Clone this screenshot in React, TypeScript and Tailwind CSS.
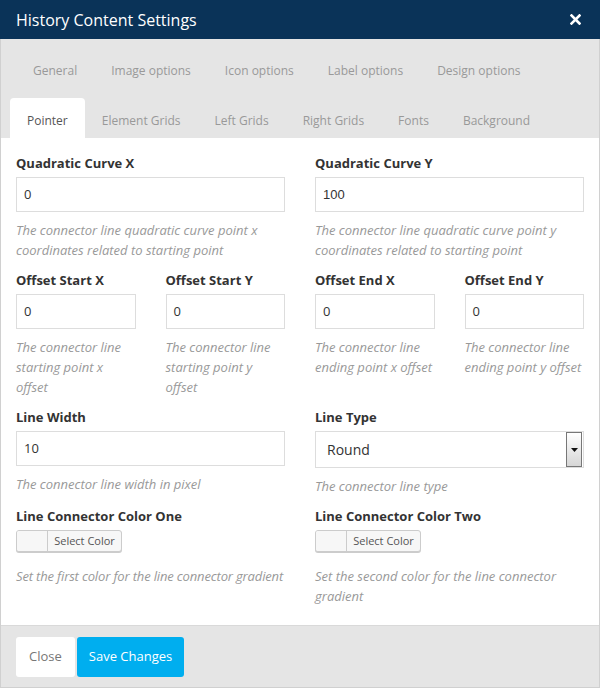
import React from "react";

const font = { fontFamily: '"Open Sans", "Liberation Sans", sans-serif' };

function Label({ children }: { children: React.ReactNode }) {
  return <div className="text-[13px] leading-[20px] font-bold text-[#333] mb-[4px]">{children}</div>;
}

function Help({ children, className = "" }: { children: React.ReactNode; className?: string }) {
  return <div className={"text-[13px] leading-[20px] italic text-[#999] " + className}>{children}</div>;
}

function TextInput({ value, mono = false }: { value: string; mono?: boolean }) {
  return (
    <div
      className={"h-[35px] border border-[#dddddd] bg-white flex items-center px-[7px] text-[13px] text-[#333] " + (mono ? "font-['Liberation_Sans']" : "")}
    >
      {value}
    </div>
  );
}

function Field({ label, value, help, mono }: { label: string; value: string; help: React.ReactNode; mono?: boolean }) {
  return (
    <div className="mb-[10px]">
      <Label>{label}</Label>
      <TextInput value={value} mono={mono} />
      <Help className="mt-[8px]">{help}</Help>
    </div>
  );
}

function ColorButton() {
  return (
    <div className="flex h-[22px] w-[106px] rounded-[3px] border border-[#cccccc] bg-[#f7f7f7] shadow-[0_1px_0_#cccccc] overflow-hidden">
      <div className="w-[31px] border-r border-[#cccccc] bg-[#f7f7f7]" />
      <div className="flex-1 flex items-center justify-center text-[11px] text-[#555]">Select Color</div>
    </div>
  );
}

export default function App() {
  const row1 = ["General", "Image options", "Icon options", "Label options", "Design options"];
  const row2 = ["Element Grids", "Left Grids", "Right Grids", "Fonts", "Background"];
  return (
    <div className="w-[600px] h-[688px] bg-white" style={font}>
      <div className="h-[39px] bg-[#0a3358] flex items-center justify-between pl-[16px] pr-[19px]">
        <div className="text-white text-[16px] leading-none">History Content Settings</div>
        <svg width="11" height="11" viewBox="0 0 11 11">
          <path d="M1.5 1.5 L9.5 9.5 M9.5 1.5 L1.5 9.5" stroke="white" strokeWidth="2.6" strokeLinecap="square" />
        </svg>
      </div>
      <div className="h-[649px] bg-[#e5e5e5] border-x border-b border-[#d0d0d0] flex flex-col">
        <div className="pt-[11px]">
          <div className="flex pl-[15px] h-[40px] items-center pt-[2px]">
            {row1.map((t) => (
              <div key={t} className="px-[17px] text-[12px] text-[#999]">{t}</div>
            ))}
          </div>
          <div className="flex pl-[9px] mt-[8px] h-[40px]">
            <div className="px-[17px] pt-[5px] bg-white rounded-t-[4px] flex items-center text-[12px] text-[#555]">Pointer</div>
            {row2.map((t) => (
              <div key={t} className="px-[17px] pt-[5px] flex items-center text-[12px] text-[#999]">{t}</div>
            ))}
          </div>
        </div>
        <div className="bg-white border-b border-[#d9d9d9] px-[15px] pt-[15px] pb-[19px]">
          <div className="grid grid-cols-4 gap-x-[30px]">
            <div className="col-span-2">
              <Field label="Quadratic Curve X" value="0" help={<>The connector line quadratic curve point x<br />coordinates related to starting point</>} />
            </div>
            <div className="col-span-2">
              <Field label="Quadratic Curve Y" value="100" mono help={<>The connector line quadratic curve point y<br />coordinates related to starting point</>} />
            </div>
            <Field label="Offset Start X" value="0" help={<>The connector line<br />starting point x<br />offset</>} />
            <Field label="Offset Start Y" value="0" help={<>The connector line<br />starting point y<br />offset</>} />
            <Field label="Offset End X" value="0" help={<>The connector line<br />ending point x offset</>} />
            <Field label="Offset End Y" value="0" help={<>The connector line<br />ending point y offset</>} />
            <div className="col-span-2">
              <Field label="Line Width" value="10" help="The connector line width in pixel" />
            </div>
            <div className="col-span-2 mb-[10px]">
              <Label>Line Type</Label>
              <div className="h-[37px] border border-[#dddddd] flex items-center justify-between pl-[11px] pr-[1px]">
                <span className="text-[14px] text-[#333]">Round</span>
                <div className="w-[16px] h-[35px] border border-[#777] bg-gradient-to-b from-white to-[#d6d6d6] flex items-center justify-center">
                  <svg width="7" height="4" viewBox="0 0 7 4">
                    <path d="M0 0 H7 L3.5 4 Z" fill="#111" />
                  </svg>
                </div>
              </div>
              <Help className="mt-[8px]">The connector line type</Help>
            </div>
            <div className="col-span-2">
              <Label>Line Connector Color One</Label>
              <ColorButton />
              <Help className="mt-[14px] whitespace-nowrap tracking-[-0.15px]">Set the first color for the line connector gradient</Help>
            </div>
            <div className="col-span-2">
              <Label>Line Connector Color Two</Label>
              <ColorButton />
              <Help className="mt-[14px]">Set the second color for the line connector<br />gradient</Help>
            </div>
          </div>
        </div>
        <div className="flex-1 flex items-center pl-[15px] gap-[2px]">
          <div className="h-[40px] px-[13px] bg-white rounded-[3px] flex items-center text-[13px] text-[#777]">Close</div>
          <div className="h-[40px] px-[12px] bg-[#00aeef] rounded-[3px] flex items-center text-[13px] text-white">Save Changes</div>
        </div>
      </div>
    </div>
  );
}
